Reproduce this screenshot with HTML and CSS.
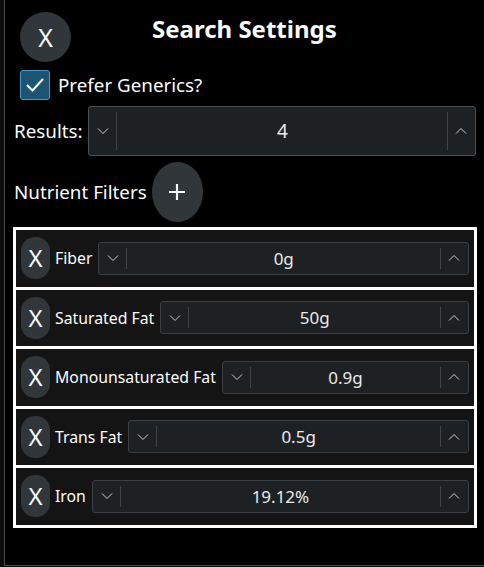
FILE: index.html
```html
<!DOCTYPE html>
<html>
<head>
<meta charset="utf-8">
<link rel="stylesheet" href="styles.css">
</head>
<body>
<div class="win">
  <header class="head">
    <button class="close">X</button>
    <h1 class="title">Search Settings</h1>
  </header>
  <label class="check">
    <span class="box"><svg width="22" height="22" viewBox="0 0 22 22"><polyline points="3,11 8.5,16.5 19,5" fill="none" stroke="#fff" stroke-width="2"/></svg></span>
    <span>Prefer Generics?</span>
  </label>
  <div class="results">
    <span class="lbl">Results:</span>
    <div class="spin big">
      <span class="sbtn down"><svg width="12" height="8" viewBox="0 0 12 8"><polyline points="1,1.5 6,6.5 11,1.5" fill="none" stroke="#d0d0d0" stroke-width="1"/></svg></span>
      <span class="val">4</span>
      <span class="sbtn up"><svg width="12" height="8" viewBox="0 0 12 8"><polyline points="1,6.5 6,1.5 11,6.5" fill="none" stroke="#d0d0d0" stroke-width="1"/></svg></span>
    </div>
  </div>
  <div class="nf">
    <span class="lbl">Nutrient Filters</span>
    <button class="plus"><svg width="18" height="18" viewBox="0 0 18 18"><path d="M9 1V17M1 9H17" stroke="#fff" stroke-width="2.2"/></svg></button>
  </div>
  <div class="filters">
    <div class="row">
      <button class="rx">X</button><span class="name">Fiber</span>
      <div class="spin">
        <span class="sbtn down"><svg width="12" height="8" viewBox="0 0 12 8"><polyline points="1,1.5 6,6.5 11,1.5" fill="none" stroke="#d0d0d0" stroke-width="1"/></svg></span>
        <span class="val">0g</span>
        <span class="sbtn up"><svg width="12" height="8" viewBox="0 0 12 8"><polyline points="1,6.5 6,1.5 11,6.5" fill="none" stroke="#d0d0d0" stroke-width="1"/></svg></span>
      </div>
    </div>
    <div class="row">
      <button class="rx">X</button><span class="name">Saturated Fat</span>
      <div class="spin">
        <span class="sbtn down"><svg width="12" height="8" viewBox="0 0 12 8"><polyline points="1,1.5 6,6.5 11,1.5" fill="none" stroke="#d0d0d0" stroke-width="1"/></svg></span>
        <span class="val">50g</span>
        <span class="sbtn up"><svg width="12" height="8" viewBox="0 0 12 8"><polyline points="1,6.5 6,1.5 11,6.5" fill="none" stroke="#d0d0d0" stroke-width="1"/></svg></span>
      </div>
    </div>
    <div class="row">
      <button class="rx">X</button><span class="name">Monounsaturated Fat</span>
      <div class="spin">
        <span class="sbtn down"><svg width="12" height="8" viewBox="0 0 12 8"><polyline points="1,1.5 6,6.5 11,1.5" fill="none" stroke="#d0d0d0" stroke-width="1"/></svg></span>
        <span class="val">0.9g</span>
        <span class="sbtn up"><svg width="12" height="8" viewBox="0 0 12 8"><polyline points="1,6.5 6,1.5 11,6.5" fill="none" stroke="#d0d0d0" stroke-width="1"/></svg></span>
      </div>
    </div>
    <div class="row">
      <button class="rx">X</button><span class="name">Trans Fat</span>
      <div class="spin">
        <span class="sbtn down"><svg width="12" height="8" viewBox="0 0 12 8"><polyline points="1,1.5 6,6.5 11,1.5" fill="none" stroke="#d0d0d0" stroke-width="1"/></svg></span>
        <span class="val">0.5g</span>
        <span class="sbtn up"><svg width="12" height="8" viewBox="0 0 12 8"><polyline points="1,6.5 6,1.5 11,6.5" fill="none" stroke="#d0d0d0" stroke-width="1"/></svg></span>
      </div>
    </div>
    <div class="row last">
      <button class="rx">X</button><span class="name">Iron</span>
      <div class="spin">
        <span class="sbtn down"><svg width="12" height="8" viewBox="0 0 12 8"><polyline points="1,1.5 6,6.5 11,1.5" fill="none" stroke="#d0d0d0" stroke-width="1"/></svg></span>
        <span class="val">19.12%</span>
        <span class="sbtn up"><svg width="12" height="8" viewBox="0 0 12 8"><polyline points="1,6.5 6,1.5 11,6.5" fill="none" stroke="#d0d0d0" stroke-width="1"/></svg></span>
      </div>
    </div>
  </div>
</div>
</body>
</html>
```
FILE: styles.css
```css
* { box-sizing: border-box; }
html, body { margin: 0; padding: 0; }
body {
  background: #0c0c0c;
  width: 484px;
  height: 567px;
  overflow: hidden;
  font-family: "Noto Sans", "DejaVu Sans", sans-serif;
  color: #fcfcfc;
}
.win {
  margin-left: 4px;
  height: 566px;
  background: #000;
  border-left: 1px solid #4a4a4a;
  border-bottom: 1px solid #4a4a4a;
  padding: 12px 0 0 0;
}
button {
  font-family: inherit;
  border: none;
  padding: 0;
  color: #fcfcfc;
  cursor: pointer;
}
.head {
  display: flex;
  align-items: center;
  height: 50px;
  padding-left: 15px;
}
.close {
  width: 51px;
  height: 50px;
  border-radius: 50%;
  background: #31363b;
  font-size: 25px;
  line-height: 50px;
}
.title {
  margin: 0 0 0 81px;
  font-size: 24px;
  font-weight: 700;
  line-height: 1;
  position: relative;
  top: -8px;
}
.check {
  display: flex;
  align-items: center;
  gap: 8px;
  margin: 8px 0 0 15px;
  font-size: 18.8px;
  height: 30px;
}
.box {
  width: 30px;
  height: 30px;
  border: 1px solid #3a9bd2;
  border-radius: 3px;
  background: #1d5472;
  display: flex;
  align-items: center;
  justify-content: center;
}
.results {
  display: flex;
  align-items: center;
  margin: 6px 0 0 9px;
  gap: 5px;
}
.lbl { font-size: 18.8px; }
.spin {
  display: flex;
  align-items: stretch;
  background: #1e2124;
  border: 1px solid #4a4f54;
  border-radius: 3px;
}
.spin.big {
  width: 388px;
  height: 50px;
}
.sbtn {
  width: 28px;
  display: flex;
  align-items: center;
  justify-content: center;
  position: relative;
}
.sbtn::after {
  content: "";
  position: absolute;
  top: 5px;
  bottom: 5px;
  width: 1px;
  background: #3f4449;
}
.sbtn.down::after { right: 0; }
.sbtn.up::after { left: 0; }
.val {
  flex: 1;
  display: flex;
  align-items: center;
  justify-content: center;
  font-size: 17px;
  color: #eaeaea;
}
.big .val { font-size: 19px; padding-left: 2px; }
.nf {
  display: flex;
  align-items: center;
  margin: 6px 0 0 9px;
  gap: 5px;
  height: 60px;
}
.plus {
  width: 51px;
  height: 60px;
  border-radius: 26px / 30px;
  background: #31363b;
  display: flex;
  align-items: center;
  justify-content: center;
}
.filters {
  margin: 5px 0 0 8px;
  width: 464px;
}
.row {
  display: flex;
  align-items: center;
  height: 59.5px;
  border: 3px solid #fff;
  border-bottom: none;
  background: #141414;
  padding: 0 5px;
}
.row.last {
  height: 62.5px;
  border-bottom: 3px solid #fff;
}
.rx {
  width: 29px;
  height: 42px;
  border-radius: 14px;
  background: #31363b;
  font-size: 24px;
  line-height: 42px;
  flex: none;
}
.name {
  font-size: 15.8px;
  margin: 0 6px 0 5px;
  white-space: nowrap;
}
.row .spin {
  flex: 1;
  height: 33px;
  border-color: #3a3f44;
}
.row .sbtn::after { top: 5px; bottom: 5px; }
```
